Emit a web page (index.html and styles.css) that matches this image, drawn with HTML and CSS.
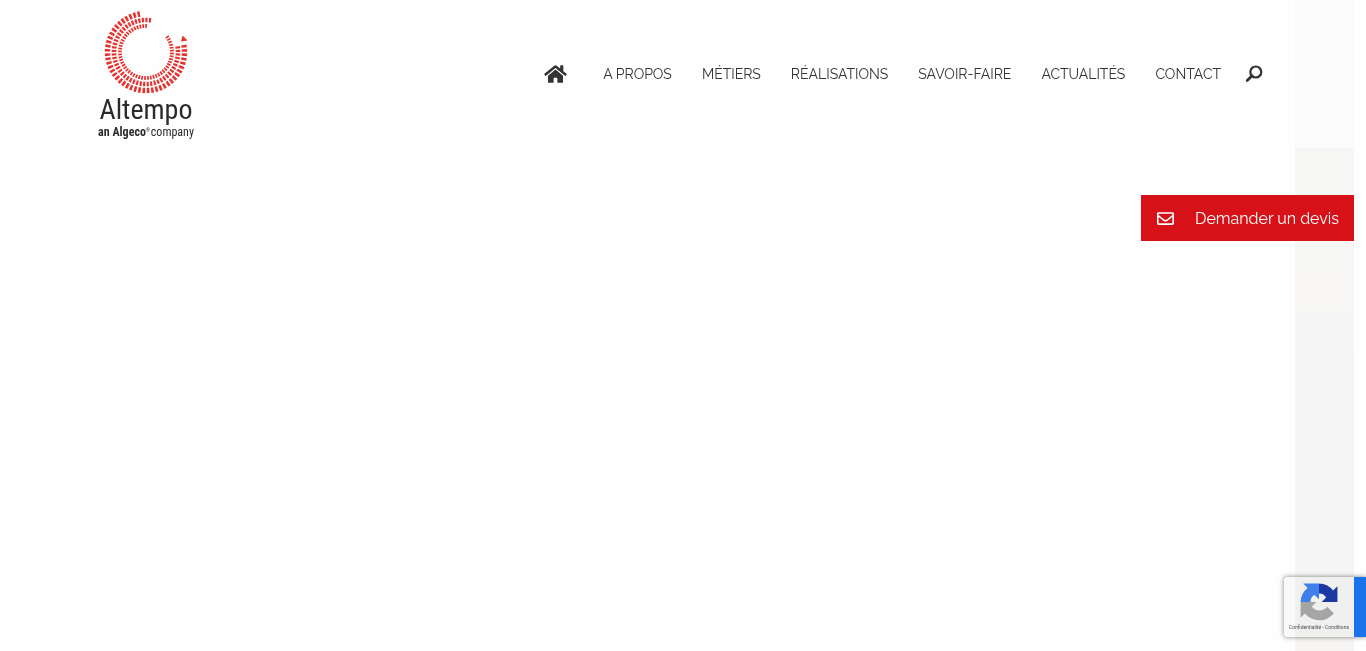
FILE: index.html
```html
<!DOCTYPE html>
<html lang="fr">
<head>
<meta charset="utf-8">
<meta name="viewport" content="width=device-width, initial-scale=1">
<title>Altempo</title>
<link rel="stylesheet" href="styles.css">
</head>
<body>
<header class="header">
  <a class="logo" href="#" aria-label="Altempo, an Algeco company">
    <svg class="logo-mark" viewBox="-42 -42 84 84" aria-hidden="true">
      <g fill="none" stroke="#e6332f">
        <path d="M-6 -38A38.5 38.5 0 1 0 37.5 -8.7" stroke-width="5.400" pathLength="430" stroke-dasharray="6 4"/>
        <path d="M5 -31.6A32 32 0 1 0 31.5 -5.6" stroke-width="4.600" pathLength="456" stroke-dasharray="6 4"/>
        <path d="M.9 -26A26 26 0 1 0 20.8 -15.6" stroke-width="3.800" pathLength="486" stroke-dasharray="6 4"/>
      </g>
      <path d="M36.6 -16.6 41.500 -11.6 35 -10.400Z" fill="#e6332f"/>
    </svg>
    <span class="logo-name">Altempo</span>
    <span class="logo-tag"><b>an Algeco<span class="logo-reg">®</span></b><span>company</span></span>
  </a>
  <nav class="nav" aria-label="Menu principal">
    <a class="nav-home" href="#" aria-label="Accueil">
      <svg viewBox="0 0 576 512" width="23" height="20" fill="currentColor" aria-hidden="true"><path d="M280.4 148.3 96 300.1V464a16 16 0 0 0 16 16l112.1-.3a16 16 0 0 0 15.9-16V368a16 16 0 0 1 16-16h64a16 16 0 0 1 16 16v95.600a16 16 0 0 0 16 16.100L464 480a16 16 0 0 0 16-16V300L295.700 148.300a12.200 12.200 0 0 0-15.300 0zM571.600 251.500 488 182.600V44.100a12 12 0 0 0-12-12h-56a12 12 0 0 0-12 12v72.600L318.500 43a48 48 0 0 0-61 0L4.300 251.500a12 12 0 0 0-1.600 16.900l25.500 31a12 12 0 0 0 16.900 1.600L280.400 107.200a12.200 12.200 0 0 1 15.300 0L531 301a12 12 0 0 0 16.900-1.600l25.500-31a12 12 0 0 0-1.800-16.900z"/></svg>
    </a>
    <a href="#">A PROPOS</a>
    <a href="#">MÉTIERS</a>
    <a href="#">RÉALISATIONS</a>
    <a href="#">SAVOIR-FAIRE</a>
    <a href="#">ACTUALITÉS</a>
    <a href="#">CONTACT</a>
  </nav>
  <button class="search" type="button" aria-label="Rechercher">
    <svg viewBox="0 0 18 18" width="18" height="18" fill="none" stroke="currentColor" aria-hidden="true"><circle cx="10.800" cy="7" r="5.500" stroke-width="2.200"/><path d="M7 10.800 2.200 15.600" stroke-width="2.800" stroke-linecap="round"/></svg>
  </button>
</header>
<div class="panel" aria-hidden="true"><div class="panel-top"></div><div class="panel-body"></div></div>
<a class="quote" href="#">
  <svg viewBox="0 0 512 512" width="17" height="17" fill="currentColor" aria-hidden="true"><path d="M464 64H48C21.500 64 0 85.500 0 112v288c0 26.500 21.500 48 48 48h416c26.500 0 48-21.500 48-48V112c0-26.500-21.500-48-48-48zm0 48v40.800c-22.400 18.300-58.200 46.700-134.600 106.500-16.800 13.200-50.200 45.100-73.400 44.700-23.200.4-56.600-31.500-73.400-44.700C106.200 199.500 70.400 171.100 48 152.800V112h416zM48 400V214.400c22.900 18.300 55.400 43.900 104.900 82.600 21.900 17.200 60.100 55.200 103.100 55 42.700.2 80.500-37.200 103.100-54.900 49.500-38.800 82-64.400 104.900-82.700V400H48z"/></svg>
  <span>Demander un devis</span>
</a>
<aside class="badge" aria-label="reCAPTCHA">
  <div class="badge-card">
    <svg viewBox="0 0 64 64" width="38" height="38" aria-hidden="true">
      <path d="M63 32V5.500L55.700 12.800A31 31 0 0 0 32 1V17.500C38 17.500 42 20 44 24.500L36.500 32Z" fill="#1c3aa9"/>
      <path d="M32 1H5.500L12.800 8.300A31 31 0 0 0 1 32H17.500C17.500 26 20 22 24.500 20L32 27.500Z" fill="#4285f4"/>
      <path d="M1 32V58.500L8.300 51.200A31 31 0 0 0 57 51L45.500 40A15.500 15.500 0 0 1 20 39.500L27.500 32Z" fill="#ababab"/>
    </svg>
    <p class="badge-links"><a href="#">Confidentialité</a> - <a href="#">Conditions</a></p>
  </div>
</aside>
</body>
</html>
```
FILE: styles.css
```css
* { box-sizing: border-box; }

body {
  margin: 0;
  min-height: 100vh;
  background: #fefefe;
  color: #333;
  font-family: Raleway, Lato, sans-serif;
}

a { color: inherit; text-decoration: none; }
svg { display: block; }

.header {
  display: flex;
  align-items: center;
  height: 148px;
  padding: 0 103px 0 99px;
}

.logo {
  display: flex;
  flex-direction: column;
  align-items: center;
  width: 94px;
  color: #2b2b2a;
  font-family: "Roboto Condensed", "Liberation Sans Narrow", "Liberation Sans", sans-serif;
  white-space: nowrap;
}
.logo-mark { width: 84px; height: 84px; }
.logo-name { font-size: 28px; line-height: 32px; }
.logo-tag { display: flex; gap: 1px; font-size: 12px; line-height: 12px; }
.logo-tag b { display: flex; }
.logo-reg { font-size: 5px; line-height: 8px; }

.nav {
  display: flex;
  align-items: center;
  gap: 30px;
  margin-left: auto;
  font-size: 14px;
  line-height: 20px;
  white-space: nowrap;
}
.nav-home { margin-right: 6px; }

.search {
  margin-left: 24px;
  padding: 0;
  border: 0;
  background: none;
  color: #333;
}

.panel {
  position: absolute;
  top: 0;
  right: 12px;
  bottom: 0;
  z-index: 3;
  display: flex;
  flex-direction: column;
  width: 59px;
  mix-blend-mode: multiply;
  pointer-events: none;
}
.panel-top { height: 148px; background: #fcfcfc; }
.panel-body {
  flex: 1;
  background: linear-gradient(#f7f7f6, #f8f7f6 30%, #f6f6f6 45%, #f6f6f6 75%, #f7f6f5);
}

.quote {
  position: absolute;
  top: 195px;
  right: 12px;
  z-index: 4;
  display: flex;
  align-items: center;
  gap: 21px;
  height: 46px;
  padding: 0 15px 0 16px;
  background: #d61218;
  color: #fff;
  font-size: 16px;
}

.badge {
  position: absolute;
  right: 0;
  bottom: 14px;
  z-index: 2;
  padding-right: 12px;
  border-radius: 2px 0 0 2px;
  background: #1a73e8;
  box-shadow: 0 0 5px #808080;
}
.badge-card {
  display: flex;
  flex-direction: column;
  align-items: center;
  width: 70px;
  height: 60px;
  padding-top: 6px;
  border-radius: 2px 0 0 2px;
  background: #f9f9f9;
}
.badge-links {
  margin: 2px 0 0;
  color: #555;
  font: 5px/8px Roboto, sans-serif;
  white-space: nowrap;
}
```
